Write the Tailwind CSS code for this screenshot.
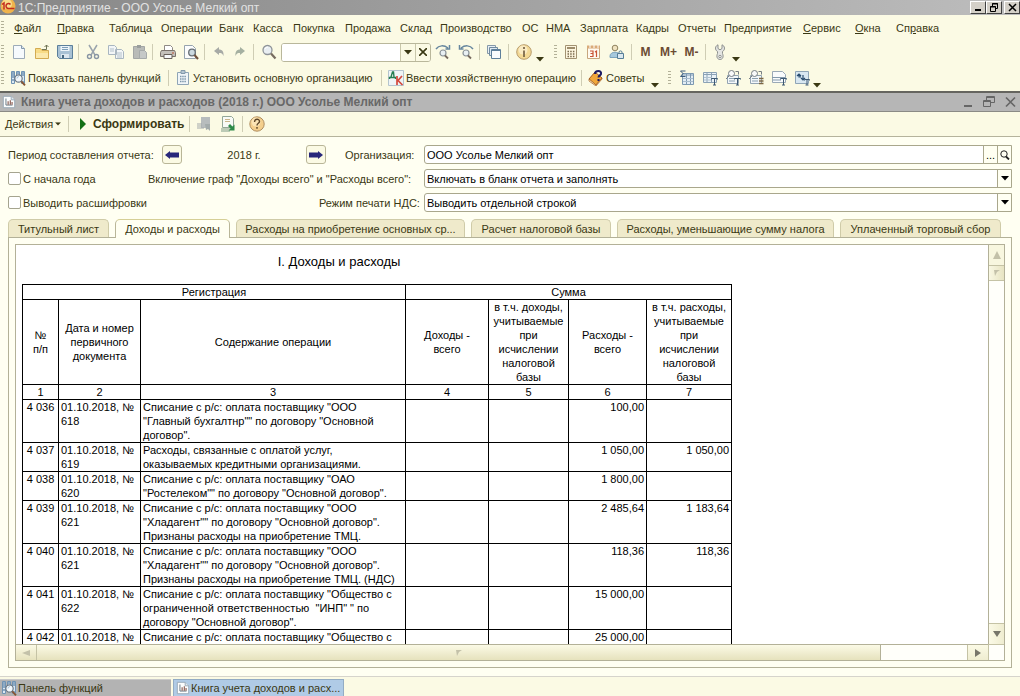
<!DOCTYPE html>
<html lang="ru">
<head>
<meta charset="utf-8">
<title>1С:Предприятие - ООО Усолье Мелкий опт</title>
<script src="https://cdn.jsdelivr.net/npm/@tailwindcss/browser@4"></script>
</head>
<body class="h-screen overflow-hidden flex flex-col bg-[#fbfae4] text-[#3a3813] text-[11px] leading-[14px] font-['Liberation_Sans',Arial,sans-serif] whitespace-nowrap">

<svg class="hidden" aria-hidden="true">
  <symbol id="funcs" viewBox="0 0 16 16"><path d="M1.500 1.500h3v12h-3zM6.500 1.500h3v5h-3zM11.500 1.500h3v12h-3z" fill="#dce9f3" stroke="#6f93b3"/><path d="M2 3h2M2 5h2M2 7h2M2 10h2M7 3h2M12 3h2M12 5h2M12 12h2" stroke="#3f6b94"/><circle cx="8.500" cy="8.500" r="3.700" fill="#f3f8fb" stroke="#6b7885" stroke-width="1.200"/><path d="M7 8.500a2 2 0 0 1 2-2" stroke="#a9c6dc" fill="none"/><path d="M11.300 11.300l3.700 4" stroke="#875533" stroke-width="1.800"/></symbol>
  <symbol id="report" viewBox="0 0 16 16"><path d="M1.500 1.500h9l4 4v9h-13z" fill="#fcfdfd" stroke="#93a5b4"/><path d="M10.500 1.500v4h4" fill="#dfe7ed" stroke="#93a5b4"/><path d="M4.500 4v7.500H12" stroke="#5d6d78" fill="none"/><path d="M7 7v4M9.500 6v5M11.500 8v3" stroke="#8a5a50" stroke-width="1.300"/></symbol>
  <symbol id="grip" viewBox="0 0 4 16"><path d="M1 1.500h3M1 4.500h3M1 7.500h3M1 10.500h3M1 13.500h3" stroke="#b3b198"/></symbol>
  <symbol id="down" viewBox="0 0 8 5"><path d="M0 0h8L4 4.500z" fill="currentColor"/></symbol>
  <symbol id="find" viewBox="0 0 16 16"><circle cx="6.500" cy="6" r="4.500" fill="#e9eef2" stroke="#8e9398" stroke-width="1.300"/><path d="M4 5a3 3 0 0 1 3-2" stroke="#fff" fill="none"/><path d="M10 9.500l4.500 5" stroke="#776c60" stroke-width="2.200"/></symbol>
</svg>

<header class="h-[15px] shrink-0 flex items-center bg-linear-to-r from-[#878787] to-[#bdbdbd] text-[#e2e2e2]">
  <svg class="w-4 h-[15px] shrink-0" viewBox="0 0 16 15"><circle cx="8" cy="6" r="7.500" fill="#efb34c"/><circle cx="7" cy="4" r="5" fill="#f9dc8a"/><path d="M2 4.500L4 3v6.500M10.500 4.500A2.500 2.500 0 1 0 8.500 8.500h6" fill="none" stroke="#c22b1c" stroke-width="1.500"/></svg>
  <h1 class="ml-0.5 flex-1 text-[12px]">1С:Предприятие - ООО Усолье Мелкий опт</h1>
  <div class="flex text-black">
    <button aria-label="Свернуть" class="w-4 h-[13px] bg-[#d4d0c8] border border-t-white border-l-white border-r-[#404040] border-b-[#404040]"><svg viewBox="0 0 14 11"><path d="M4 8h6" stroke="#000" stroke-width="2"/></svg></button>
    <button aria-label="Восстановить" class="w-4 h-[13px] bg-[#d4d0c8] border border-t-white border-l-white border-r-[#404040] border-b-[#404040]"><svg viewBox="0 0 14 11"><path d="M5.500 4V1.500h5v5H9M5 2h6M3.500 4.500h5v5h-5zM3 5h6" fill="none" stroke="#000"/></svg></button>
    <button aria-label="Закрыть" class="ml-0.5 w-4 h-[13px] bg-[#d4d0c8] border border-t-white border-l-white border-r-[#404040] border-b-[#404040]"><svg viewBox="0 0 14 11"><path d="M4 2l7 7M11 2l-7 7" stroke="#000" stroke-width="1.500"/></svg></button>
  </div>
</header>

<nav class="h-[26px] shrink-0 flex items-center" aria-label="Главное меню">
  <svg class="w-1 h-4 mr-[10px]"><use href="#grip"/></svg>
  <div class="grid grid-cols-[43px_52px_52px_58px_34px_40px_52px_55px_40px_82px_24px_34px_56px_42px_46px_79px_52px_41px_50px] justify-items-start">
    <button><u>Ф</u>айл</button><button><u>П</u>равка</button><button>Таблица</button><button>Операции</button><button>Банк</button><button>Касса</button><button>Покупка</button><button>Продажа</button><button>Склад</button><button>Производство</button><button>ОС</button><button>НМА</button><button>Зарплата</button><button>Кадры</button><button>Отчеты</button><button>Предприятие</button><button><u>С</u>ервис</button><button><u>О</u>кна</button><button>Сп<u>р</u>авка</button>
  </div>
</nav>

<div class="h-[24px] pb-0.5 shrink-0 flex items-center" role="toolbar" aria-label="Стандартная">
  <svg class="w-1 h-4 mr-[3px]"><use href="#grip"/></svg>
  <button aria-label="Новый" class="w-[23px] grid place-items-center"><svg class="size-4" viewBox="0 0 16 16"><path d="M2.500 1.500h8l3 3v10h-11z" fill="#f6fafd" stroke="#9cabb8"/><path d="M10.500 1.500v3h3" fill="#dbe6ef" stroke="#8498ab"/></svg></button>
  <button aria-label="Открыть" class="w-[23px] grid place-items-center"><svg class="size-4" viewBox="0 0 16 16"><path d="M1.500 4.500h5l1.500 2h6.500v8h-13z" fill="#f8dc86" stroke="#d3ab51"/><path d="M2 9h12v5H2z" fill="#fbe9ac"/><path d="M8 5.500h4.500V1M10.500 3l2-2 2 2" fill="none" stroke="#6f7455"/></svg></button>
  <button aria-label="Сохранить" class="w-[23px] grid place-items-center"><svg class="size-4" viewBox="0 0 16 16"><path d="M.5 1.500h15v13H2.500l-2-2z" fill="#a8c1d4" stroke="#5b7f9b"/><path d="M3.500 2h9v5h-9z" fill="#edf4f9"/><path d="M5 3.500h6M5 5.500h6" stroke="#7d9eb8"/><path d="M4 10h8v4H4z" fill="#dbe6ee"/><path d="M6 11v3" stroke="#45677f" stroke-width="2"/></svg></button>
  <i class="w-px h-4 mx-[2px] bg-[#cfcdb4]"></i>
  <button aria-label="Вырезать" class="w-[23px] grid place-items-center"><svg class="size-4" viewBox="0 0 16 16"><path d="M4 1l6 10M12 1L6 11" stroke="#9aa4ad" stroke-width="1.500"/><circle cx="4.500" cy="12.500" r="2" fill="none" stroke="#8895a3" stroke-width="1.400"/><circle cx="11.500" cy="12.500" r="2" fill="none" stroke="#8895a3" stroke-width="1.400"/></svg></button>
  <button aria-label="Копировать" class="w-[24px] grid place-items-center"><svg class="size-4" viewBox="0 0 16 16"><path d="M.5 1.500h6l2 2v7h-8zM7.500 5.500h6l2 2v7h-8z" fill="#f3f6f7" stroke="#a9b6c0"/><path d="M2 5h4M2 7h4M9 9h5M9 11h5M9 13h5" stroke="#b3c0ca"/></svg></button>
  <button aria-label="Вставить" class="w-[23px] grid place-items-center"><svg class="size-4" viewBox="0 0 16 16"><path d="M1.500 2.500h11v12h-11z" fill="#b9bbb8" stroke="#a3a6a5"/><path d="M5 1h4v3H5z" fill="#9a9e9d"/><path d="M7.500 6.500h5l2 2v6h-7z" fill="#c5c8c7" stroke="#a6aaaa"/></svg></button>
  <i class="w-px h-4 ml-px mr-[3px] bg-[#cfcdb4]"></i>
  <button aria-label="Печать" class="w-[23px] grid place-items-center"><svg class="size-4" viewBox="0 0 16 16"><path d="M4.500 1.500h6l2 2V7h-8z" fill="#fff" stroke="#8f8a85"/><path d="M1.500 6.500h13l1 2v4H.5v-4z" fill="#c4c0ba" stroke="#7a726b"/><path d="M4 10.500h8v4H4z" fill="#f7f8fa" stroke="#69615a"/><path d="M12 9h2" stroke="#b85335"/></svg></button>
  <button aria-label="Просмотр" class="w-[23px] grid place-items-center"><svg class="size-4" viewBox="0 0 16 16"><path d="M1.500 1.500h8l3 3v10h-11z" fill="#fbfcfd" stroke="#96a3ad"/><circle cx="9" cy="8.500" r="3.300" fill="#ccd9e0" stroke="#676e74" stroke-width="1.300"/><path d="M11.500 11l3.500 4" stroke="#70503b" stroke-width="2"/></svg></button>
  <i class="w-px h-4 mx-[2px] bg-[#cfcdb4]"></i>
  <button aria-label="Отменить" class="w-[23px] grid place-items-center"><svg class="size-3" viewBox="0 0 12 12"><path d="M1 5l5-4v2.500c3 0 5 2 4.500 6.500C9.500 7.500 8.500 7 6 7v2z" fill="#a7aaa6"/></svg></button>
  <button aria-label="Повторить" class="w-[20px] grid place-items-center"><svg class="size-3" viewBox="0 0 12 12"><path d="M11 5L6 1v2.500C3 3.500 1 5.500 1.500 10 2.500 7.500 3.500 7 6 7v2z" fill="#a5b0a1"/></svg></button>
  <i class="w-px h-4 mx-[3px] bg-[#cfcdb4]"></i>
  <button aria-label="Найти" class="w-[24px] grid place-items-center"><svg class="size-4"><use href="#find"/></svg></button>
  <div class="flex w-[150px] h-[19px] rounded-[3px] border border-[#b9b79b] bg-white overflow-hidden">
    <input aria-label="Строка поиска" class="flex-1 min-w-0 px-1 outline-none bg-white">
    <button aria-label="Список" class="w-[15px] grid place-items-center border-l border-[#c9c7aa] bg-[#fbfae4]"><svg class="w-2 h-[5px]"><use href="#down"/></svg></button>
    <button aria-label="Очистить" class="w-[15px] grid place-items-center border-l border-[#c9c7aa] bg-[#fbfae4]"><svg class="size-2" viewBox="0 0 8 8"><path d="M0 0l8 8M8 0L0 8" stroke="#3a3813" stroke-width="1.600"/></svg></button>
  </div>
  <button aria-label="Найти следующий" class="w-[23px] grid place-items-center"><svg class="size-4" viewBox="0 0 16 16"><path d="M1 5c3-4 8-4 12-1M14.500 1v4h-4" fill="none" stroke="#66869e" stroke-width="1.500"/><circle cx="8" cy="9" r="3" fill="#e9f0f3" stroke="#8a9298" stroke-width="1.200"/><path d="M10 11.500l3 3" stroke="#76695e" stroke-width="1.800"/></svg></button>
  <button aria-label="Найти предыдущий" class="w-[23px] grid place-items-center"><svg class="size-4" viewBox="0 0 16 16"><path d="M15 5c-3-4-8-4-12-1M1.500 1v4h4" fill="none" stroke="#66869e" stroke-width="1.500"/><circle cx="8" cy="9" r="3" fill="#e9f0f3" stroke="#8a9298" stroke-width="1.200"/><path d="M10 11.500l3 3" stroke="#76695e" stroke-width="1.800"/></svg></button>
  <i class="w-px h-4 mx-[2px] bg-[#cfcdb4]"></i>
  <button aria-label="Окна" class="w-[23px] grid place-items-center"><svg class="size-4" viewBox="0 0 16 16"><path d="M1.500 1.500h8v8h-8z" fill="#e7eff5" stroke="#8498a8"/><path d="M3.500 3.500h8v8h-8z" fill="#dce8f1" stroke="#718a9f"/><path d="M5.500 5.500h9v9h-9z" fill="#fafcfe" stroke="#5e7f9b"/><path d="M5 6.500h10" stroke="#5e7f9b"/></svg></button>
  <i class="w-px h-4 mx-[3px] bg-[#cfcdb4]"></i>
  <button aria-label="Справка" class="w-[23px] grid place-items-center"><svg class="size-4" viewBox="0 0 16 16"><circle cx="8" cy="8" r="7.300" fill="#f3d995" stroke="#b89c6c"/><circle cx="7" cy="6" r="4.500" fill="#faebc3"/><path d="M8 3v2M8 6.500V13" stroke="#7d6a4c" stroke-width="1.800"/></svg></button>
  <svg class="w-2 h-[5px] mt-3.5 ml-px mr-[9px]"><use href="#down"/></svg>
  <svg class="w-1 h-4 mr-0.5"><use href="#grip"/></svg>
  <button aria-label="Калькулятор" class="w-[23px] grid place-items-center"><svg class="size-4" viewBox="0 0 16 16"><path d="M2.500 1.500h11v13h-11z" fill="#fdf6df" stroke="#a29272"/><path d="M4 4h8" stroke="#9c8c6c" stroke-width="2"/><path d="M4.500 7.500h7M4.500 10h7M4.500 12.500h7" stroke="#7a6a4e" stroke-width="1.500" stroke-dasharray="1.500 1.200"/></svg></button>
  <button aria-label="Календарь" class="w-[23px] grid place-items-center"><svg class="size-4" viewBox="0 0 16 16"><path d="M1.500 2.500h12v12h-12z" fill="#fffaf0" stroke="#c7a67d"/><path d="M1 3h13" stroke="#d9ab79" stroke-width="3"/><path d="M4 1v3M8 1v3M12 1v3" stroke="#fff"/><path d="M4 7h3v5.500H4M4.500 9.500H7M9 8l1.500-1v6" fill="none" stroke="#c95235" stroke-width="1.200"/></svg></button>
  <button aria-label="Пользователь" class="w-[24px] grid place-items-center"><svg class="size-4" viewBox="0 0 16 16"><circle cx="6" cy="4" r="2.800" fill="#efe2bf" stroke="#8f8360"/><path d="M1 13.500V12c0-5 10-5 10 0v1.500z" fill="#a5c8dc" stroke="#7ba3bc"/><path d="M8.500 9.500h6v5h-6z" fill="#d9e7ef" stroke="#557d97"/><path d="M10 9.500V8c0-1.500 3-1.500 3 0v1.500" fill="none" stroke="#557d97"/></svg></button>
  <i class="w-px h-4 mx-[2px] bg-[#cfcdb4]"></i>
  <button class="w-[23px] text-[12px] font-bold text-[#6b4b33]">M</button>
  <button class="w-[23px] text-[12px] font-bold text-[#6b4b33]">M+</button>
  <button class="w-[23px] text-[12px] font-bold text-[#6b4b33]">M-</button>
  <i class="w-px h-4 mx-[2px] bg-[#cfcdb4]"></i>
  <button aria-label="Настройка" class="w-[23px] grid place-items-center"><svg class="size-4" viewBox="0 0 16 16"><path d="M6 .8v3.700l2 1.300 2-1.300V.8c3 1.200 3.500 5 .5 6.700v2c1.500 3.500 0 6-2.500 6s-4-2.500-2.500-6v-2C2.500 5.800 3 2 6 .8z" fill="#e4e5e3" stroke="#8f928f"/><circle cx="8" cy="12.500" r="1.200" fill="#fff" stroke="#8f928f"/></svg></button>
  <svg class="w-2 h-[5px] mt-3.5 ml-px"><use href="#down"/></svg>
</div>

<div class="h-[26px] shrink-0 flex items-center" role="toolbar" aria-label="Предприятие">
  <svg class="w-1 h-4 mr-1.5"><use href="#grip"/></svg>
  <button class="flex items-center gap-0.5 w-[158px]"><svg class="size-4"><use href="#funcs"/></svg>Показать панель функций</button>
  <i class="w-px h-4 mr-[6px] bg-[#cfcdb4]"></i>
  <button class="flex items-center gap-0.5 w-[206px]"><svg class="size-4" viewBox="0 0 16 16"><path d="M2.500 2.500h11v12h-11z" fill="#f0f5f8" stroke="#8fa5b6"/><path d="M6 .5h4v3H6z" fill="#b5c6d2" stroke="#8299ab"/><path d="M5 6.500h6M5 9h6M5 11.500h6" stroke="#7d97ab" stroke-width="1.300" stroke-dasharray="1.500 .7"/></svg>Установить основную организацию</button>
  <i class="w-px h-4 mr-[6px] bg-[#cfcdb4]"></i>
  <button class="flex items-center gap-0.5 w-[193px]"><svg class="size-4" viewBox="0 0 16 16"><path d="M.5.5h15v15H.5z" fill="#eff4f6" stroke="#b4c4ce"/><path d="M3 7l1.500-5h1L6 7M1.500 9V7.500h6V9" fill="none" stroke="#257d52" stroke-width="1.400"/><path d="M9 6v9M14 6l-4 4.500L14.500 15" fill="none" stroke="#d4493d" stroke-width="1.700"/></svg>Ввести хозяйственную операцию</button>
  <i class="w-px h-4 mr-[6px] bg-[#cfcdb4]"></i>
  <button class="flex items-center gap-0.5 w-[63px]"><svg class="size-4" viewBox="0 0 16 16"><path d="M1 9l6-7 7 6-6 7z" fill="#f0a73a" stroke="#a65c1c"/><path d="M1 9v2l7 5 6-7V8l-6 7z" fill="#fff1c9" stroke="#a65c1c" stroke-width=".7"/><path d="M7 4c0-4 7-4 6 0-.3 1.500-2.500 1.500-2.500 3.500M10.500 9v2" fill="none" stroke="#1c1b63" stroke-width="2"/></svg>Советы</button>
  <svg class="w-2 h-[5px] mt-3.5 mr-[8px]"><use href="#down"/></svg>
  <svg class="w-1 h-4 mr-1"><use href="#grip"/></svg>
  <button aria-label="Журнал операций" class="w-[23px] grid place-items-center"><svg class="size-4" viewBox="0 0 16 16"><path d="M3.500 3.500h11v11h-11z" fill="#e3edf5" stroke="#7d99b1"/><path d="M3 5h12M7.500 4v10M11.500 4v10" stroke="#7e9ab2"/><path d="M4 8.500h10M4 11.500h10" stroke="#a9bdce"/><path d="M6.500 1H1.500l2.500 2.500L1.500 6.500h5" fill="none" stroke="#3d5c7c"/></svg></button>
  <button aria-label="Оборотно-сальдовая ведомость" class="w-[23px] grid place-items-center"><svg class="size-4" viewBox="0 0 16 16"><path d="M1.500 2.500h13v10h-13z" fill="#eaf2f7" stroke="#8ba2b5"/><path d="M1 4.500h14M5 3v9M9.500 3v9" stroke="#8ba2b5"/><path d="M2 7.500h8M2 10h7" stroke="#b0c2d0"/><path d="M9.500 9.500V8.500h6v1M12.500 8.500V15M11 15h3" fill="none" stroke="#3d5872"/></svg></button>
  <button aria-label="Анализ счета" class="w-[23px] grid place-items-center"><svg class="size-4" viewBox="0 0 16 16"><path d="M2.500 5.500h11v8h-11z" fill="#f3f7fa" stroke="#93a4b2"/><path d="M4 8.500h6M4 11h6" stroke="#8ba0b1"/><circle cx="6.500" cy="3.500" r="3" fill="#f9fafb" stroke="#777e83"/><path d="M4 6L1 9M10.500 1.500h3v3" fill="none" stroke="#777e83"/><path d="M9.500 9.500V8.500h6v1M12.500 8.500V15M11 15h3" fill="none" stroke="#3d5872"/></svg></button>
  <button aria-label="Карточка счета" class="w-[23px] grid place-items-center"><svg class="size-4" viewBox="0 0 16 16"><path d="M2.500 5.500h11v8h-11z" fill="#f3f7fa" stroke="#93a4b2"/><path d="M4 8.500h6M4 11h6" stroke="#8ba0b1"/><circle cx="6.500" cy="3.500" r="3" fill="#f9fafb" stroke="#777e83"/><path d="M4 6L1 9M10.500 1.500h3v3" fill="none" stroke="#777e83"/><path d="M11 8.500h4.500M11 11h4.500M11 13.500h4.500" stroke="#7c6744" stroke-width="1.300"/></svg></button>
  <button aria-label="Проводки" class="w-[23px] grid place-items-center"><svg class="size-4" viewBox="0 0 16 16"><path d="M1.500 1.500h10l3 3v8h-13z" fill="#f9fbfc" stroke="#9aa9b6"/><path d="M1 7.500h13M2 10h8" stroke="#8399ab"/><path d="M9.500 9.500V8.500h6v1M12.500 8.500V15M11 15h3" fill="none" stroke="#3d5872"/></svg></button>
  <button aria-label="Отчет по проводкам" class="w-[23px] grid place-items-center"><svg class="size-4" viewBox="0 0 16 16"><path d="M1.500 1.500h13v12h-13z" fill="#d8e7f1" stroke="#8fa5b6"/><path d="M3 6l2-2 2 2M5 4v3h2M9 5v5M7 8l2 2 2-2" fill="none" stroke="#294d70" stroke-width="1.200"/><path d="M10.500 10.500V9.500h5v1M13 9.500V15M11.500 15h3" fill="none" stroke="#3d5872"/></svg></button>
  <svg class="w-2 h-[5px] mt-3.5"><use href="#down"/></svg>
</div>

<section class="h-[21px] shrink-0 flex items-center border-t-2 border-b border-t-[#65655f] border-b-[#8a8a85] bg-[#b6b6b6] text-[#686868]">
  <svg class="size-3.5 ml-0.5 mr-[5px]"><use href="#report"/></svg>
  <h2 class="flex-1 text-[12px] font-bold">Книга учета доходов и расходов (2018 г.) ООО Усолье Мелкий опт</h2>
  <div class="flex gap-[7px] pr-[3px]">
    <button aria-label="Свернуть окно"><svg class="size-3.5" viewBox="0 0 14 14"><path d="M3 11h8" stroke="#666" stroke-width="2"/></svg></button>
    <button aria-label="Восстановить окно"><svg class="size-3.5" viewBox="0 0 14 14"><path d="M4.500 5V1.500h8v6H9M4 2.500h9M1.500 5.500h7v6h-7zM1 6.500h8" fill="none" stroke="#666"/></svg></button>
    <button aria-label="Закрыть окно"><svg class="size-3.5" viewBox="0 0 14 14"><path d="M3 2.500l9 9M12 2.500l-9 9" stroke="#666" stroke-width="1.700"/></svg></button>
  </div>
</section>

<div class="h-[25px] shrink-0 flex items-center border-b border-[#b5b39c] pl-[5px]" role="toolbar" aria-label="Отчет">
  <button class="flex items-center gap-0.5 w-[63px]">Действия<svg class="w-[6px] h-1" viewBox="0 0 8 5"><use href="#down"/></svg></button>
  <i class="w-px h-4 mr-[10px] bg-[#cfcdb4]"></i>
  <button class="flex items-center gap-1.5 w-[106px] text-[12px] font-bold"><svg class="w-2 h-3" viewBox="0 0 8 12"><path d="M1 0l6 6-6 6z" fill="#137013"/></svg>Сформировать</button>
  <i class="w-px h-4 ml-1 mr-[2px] bg-[#cfcdb4]"></i>
  <button aria-label="Свернуть строки" class="w-6 grid place-items-center"><svg class="size-4" viewBox="0 0 16 16"><path d="M5 1h9v11H5z" fill="#b7bcbd"/><path d="M1 8h5M1 10h5M1 12h7" stroke="#a3a9ab"/><path d="M9 8h5v7l-2-2-2 1z" fill="#a3abab"/></svg></button>
  <button aria-label="Развернуть строки" class="w-6 grid place-items-center"><svg class="size-4" viewBox="0 0 16 16"><path d="M2.500.5h9l2 2v9h-11z" fill="#f8faf6" stroke="#93a697"/><path d="M5 3.500h5M5 5.500h5" stroke="#c9b48a"/><path d="M1 13h9M1 15h9" stroke="#7e9b88"/><path d="M14.500 14.500v-6l-2 2L10 8 8 10l2.500 2.500-2 2z" fill="#2e8a48"/></svg></button>
  <i class="w-px h-4 ml-0.5 mr-[2px] bg-[#cfcdb4]"></i>
  <button aria-label="Помощь" class="w-6 grid place-items-center"><svg class="size-4" viewBox="0 0 16 16"><circle cx="8" cy="8" r="7.200" fill="#f4cf8d" stroke="#b08e60"/><circle cx="7" cy="6" r="4.500" fill="#fbe4b5"/><path d="M5.500 6c0-3.500 5-3.500 5-.5 0 2-2.500 1.500-2.500 4M8 11v1.800" fill="none" stroke="#5d4526" stroke-width="1.400"/></svg></button>
</div>

<main class="flex-1 min-h-0 flex flex-col bg-[#fffff2] px-2 pt-2 pb-2">
  <form class="flex flex-col gap-[5px]">
    <div class="flex items-center h-[19px]">
      <span class="w-[154px]">Период составления отчета:</span>
      <button type="button" aria-label="Предыдущий период" class="w-5 h-[19px] grid place-items-center rounded-[3px] border border-[#b9b698] bg-[#fbfae4]"><svg class="w-3.5 h-2" viewBox="0 0 14 8"><path d="M0 4l5-4v1.500h9v5H5V8z" fill="#28277a"/></svg></button>
      <output class="w-[124px] text-center">2018 г.</output>
      <button type="button" aria-label="Следующий период" class="w-5 h-[19px] grid place-items-center rounded-[3px] border border-[#b9b698] bg-[#fbfae4]"><svg class="w-3.5 h-2" viewBox="0 0 14 8"><path d="M14 4L9 0v1.500H0v5h9V8z" fill="#28277a"/></svg></button>
      <label for="org" class="w-[98px] pl-[19px]">Организация:</label>
      <div class="flex flex-1 h-[19px] rounded-l-[3px] border border-[#a9a78c] bg-white">
        <input id="org" value="ООО Усолье Мелкий опт" class="flex-1 min-w-0 px-[2px] text-black bg-transparent outline-none">
        <button type="button" class="w-3.5 border-l border-[#a9a78c] bg-[#fffff2] text-black">...</button>
        <button type="button" aria-label="Открыть организацию" class="w-3.5 grid place-items-center border-l border-[#a9a78c] bg-[#fffff2]"><svg class="size-2.5" viewBox="0 0 10 10"><circle cx="4" cy="4" r="3.200" fill="none" stroke="#222"/><path d="M6 6.500l3 3" stroke="#222" stroke-width="1.800"/></svg></button>
      </div>
    </div>
    <div class="flex items-center h-[19px]">
      <label class="flex items-center gap-[2px] w-[140px]"><input type="checkbox" class="appearance-none size-[13px] rounded-[2px] border border-[#a5a48f] bg-white">С начала года</label>
      <label for="cols" class="w-[276px]">Включение граф "Доходы всего" и "Расходы всего":</label>
      <div class="relative flex-1">
        <select id="cols" class="appearance-none block w-full h-[19px] px-[2px] rounded-l-[3px] border border-[#a9a78c] bg-white text-black"><option>Включать в бланк отчета и заполнять</option></select>
        <span class="absolute right-px inset-y-px w-3.5 grid place-items-center border-l border-[#a9a78c] bg-[#fffff2] text-black pointer-events-none"><svg class="w-2 h-[5px]"><use href="#down"/></svg></span>
      </div>
    </div>
    <div class="flex items-center h-[19px]">
      <label class="flex items-center gap-[2px] w-[311px]"><input type="checkbox" class="appearance-none size-[13px] rounded-[2px] border border-[#a5a48f] bg-white">Выводить расшифровки</label>
      <label for="vat" class="w-[105px]">Режим печати НДС:</label>
      <div class="relative flex-1">
        <select id="vat" class="appearance-none block w-full h-[19px] px-[2px] rounded-l-[3px] border border-[#a9a78c] bg-white text-black"><option>Выводить отдельной строкой</option></select>
        <span class="absolute right-px inset-y-px w-3.5 grid place-items-center border-l border-[#a9a78c] bg-[#fffff2] text-black pointer-events-none"><svg class="w-2 h-[5px]"><use href="#down"/></svg></span>
      </div>
    </div>
  </form>

  <div class="flex items-end gap-[6px] mt-[7px]" role="tablist">
    <button role="tab" class="w-[101px] h-[18px] rounded-t-[5px] border border-b-0 border-[#cfcba8] bg-[#efeacb]">Титульный лист</button>
    <button role="tab" aria-selected="true" class="w-[115px] h-[19px] -mb-px z-10 rounded-t-[5px] border border-b-0 border-[#b9b698] border-t-[#d6cf96] bg-[#fffff2]">Доходы и расходы</button>
    <button role="tab" class="w-[229px] h-[18px] rounded-t-[5px] border border-b-0 border-[#cfcba8] bg-[#efeacb]">Расходы на приобретение основных ср...</button>
    <button role="tab" class="w-[140px] h-[18px] rounded-t-[5px] border border-b-0 border-[#cfcba8] bg-[#efeacb]">Расчет налоговой базы</button>
    <button role="tab" class="w-[217px] h-[18px] rounded-t-[5px] border border-b-0 border-[#cfcba8] bg-[#efeacb]">Расходы, уменьшающие сумму налога</button>
    <button role="tab" class="w-[161px] h-[18px] rounded-t-[5px] border border-b-0 border-[#cfcba8] bg-[#efeacb]">Уплаченный торговый сбор</button>
  </div>

  <div class="flex-1 min-h-0 border border-[#b3b198] p-[6px]" role="tabpanel">
    <div class="h-full grid grid-cols-[1fr_16px] grid-rows-[1fr_16px] border border-[#b3b198] bg-white">
      <div class="overflow-hidden text-black pl-[6px] pt-[9px]">
        <table class="table-fixed w-[710px] border-collapse">
          <caption class="h-[30px] text-[13px] leading-[16px] pr-[76px]">I. Доходы и расходы</caption>
          <colgroup><col class="w-[36px]"><col class="w-[82px]"><col class="w-[265px]"><col class="w-[83px]"><col class="w-[80px]"><col class="w-[78px]"><col class="w-[85px]"></colgroup>
          <thead class="[&_th]:border [&_th]:border-black [&_th]:font-normal [&_th]:p-0 [&_th]:align-middle">
            <tr><th colspan="3">Регистрация</th><th colspan="4">Сумма</th></tr>
            <tr><th>№<br>п/п</th><th>Дата и номер<br>первичного<br>документа</th><th>Содержание операции</th><th>Доходы -<br>всего</th><th>в т.ч. доходы,<br>учитываемые<br>при<br>исчислении<br>налоговой<br>базы</th><th>Расходы -<br>всего</th><th>в т.ч. расходы,<br>учитываемые<br>при<br>исчислении<br>налоговой<br>базы</th></tr>
            <tr><th>1</th><th>2</th><th>3</th><th>4</th><th>5</th><th>6</th><th>7</th></tr>
          </thead>
          <tbody class="[&_td]:border [&_td]:border-black [&_td]:py-0 [&_td]:px-[2px] [&_td]:align-top [&_td:first-child]:text-center [&_td:nth-child(n+4)]:text-right">
            <tr><td>4 036</td><td>01.10.2018, №<br>618</td><td>Списание с р/с: оплата поставщику "ООО<br>"Главный бухгалтнр"" по договору "Основной<br>договор".</td><td></td><td></td><td>100,00</td><td></td></tr>
            <tr><td>4 037</td><td>01.10.2018, №<br>619</td><td>Расходы, связанные с оплатой услуг,<br>оказываемых кредитными организациями.</td><td></td><td></td><td>1 050,00</td><td>1 050,00</td></tr>
            <tr><td>4 038</td><td>01.10.2018, №<br>620</td><td>Списание с р/с: оплата поставщику "ОАО<br>"Ростелеком"" по договору "Основной договор".</td><td></td><td></td><td>1 800,00</td><td></td></tr>
            <tr><td>4 039</td><td>01.10.2018, №<br>621</td><td>Списание с р/с: оплата поставщику "ООО<br>"Хладагент"" по договору "Основной договор".<br>Признаны расходы на приобретение ТМЦ.</td><td></td><td></td><td>2 485,64</td><td>1 183,64</td></tr>
            <tr><td>4 040</td><td>01.10.2018, №<br>621</td><td>Списание с р/с: оплата поставщику "ООО<br>"Хладагент"" по договору "Основной договор".<br>Признаны расходы на приобретение ТМЦ. (НДС)</td><td></td><td></td><td>118,36</td><td>118,36</td></tr>
            <tr><td>4 041</td><td>01.10.2018, №<br>622</td><td>Списание с р/с: оплата поставщику "Общество с<br>ограниченной ответственностью&nbsp; "ИНП" " по<br>договору "Основной договор".</td><td></td><td></td><td>15 000,00</td><td></td></tr>
            <tr><td>4 042</td><td>01.10.2018, №<br>&nbsp;</td><td>Списание с р/с: оплата поставщику "Общество с<br>&nbsp;</td><td></td><td></td><td>25 000,00</td><td></td></tr>
          </tbody>
        </table>
      </div>
      <div class="flex flex-col justify-between border-l border-[#b3b198] bg-[#fffffa]">
        <div>
          <button aria-label="Вверх" class="w-full h-[21px] grid place-items-center border-b border-[#c5c3a5] bg-[#f8f7df]"><svg class="size-2" viewBox="0 0 8 8"><path d="M4 0l4 8H0z" fill="#c3c1a9"/></svg></button>
          <div class="h-[15px] grid place-items-center border-b border-[#c5c3a5] bg-linear-to-r from-[#f9f8e3] to-[#e7e4c2]"><svg class="size-1.5" viewBox="0 0 6 6"><path d="M0 0h6L3 2 1 6z" fill="#c3c1a9"/></svg></div>
        </div>
        <button aria-label="Вниз" class="w-full h-[21px] grid place-items-center border-t border-[#c5c3a5] bg-linear-to-r from-[#fbfae6] to-[#efedd0]"><svg class="w-2 h-1.5" viewBox="0 0 8 6"><path d="M0 0h8L4 6z" fill="#77766a"/></svg></button>
      </div>
      <div class="flex border-t border-[#b3b198] bg-[#fffffa]">
        <button aria-label="Влево" class="w-[21px] grid place-items-center border-r border-[#c5c3a5] bg-linear-to-b from-[#fbfae6] to-[#e6e2bd]"><svg class="w-2 h-1.5" viewBox="0 0 8 6"><path d="M8 0v6L0 3z" fill="#c3c1a9"/></svg></button>
        <div class="w-[844px] shrink grid place-items-center border-r border-[#b3b198] bg-linear-to-b from-[#fbfae6] to-[#e6e2bd]"><svg class="size-1.5" viewBox="0 0 6 6"><path d="M0 0h6L3 2 1 6z" fill="#c3c1a9"/></svg></div>
        <button aria-label="Вправо" class="ml-auto w-[21px] grid place-items-center border-l border-[#c5c3a5] bg-linear-to-b from-[#fbfae6] to-[#efedd0]"><svg class="w-1.5 h-2" viewBox="0 0 6 8"><path d="M0 0v8l6-4z" fill="#77766a"/></svg></button>
      </div>
      <div class="border-t border-l border-[#c5c3a5] bg-[#fffffa]"></div>
    </div>
  </div>
</main>

<footer class="h-5 shrink-0 flex items-end gap-[2px] border-t border-[#d6d4cc]">
  <button class="flex items-center gap-px w-[171px] h-[17px] pl-px border-t border-[#cacaca] bg-[#b3b3b3]"><svg class="size-4"><use href="#funcs"/></svg>Панель функций</button>
  <button class="flex items-center gap-px w-[171px] h-[17px] pl-[2px] border border-b-0 border-[#93acc4] bg-[#b0cbe6]"><svg class="size-3.5"><use href="#report"/></svg>Книга учета доходов и расх...</button>
</footer>
</body>
</html>
